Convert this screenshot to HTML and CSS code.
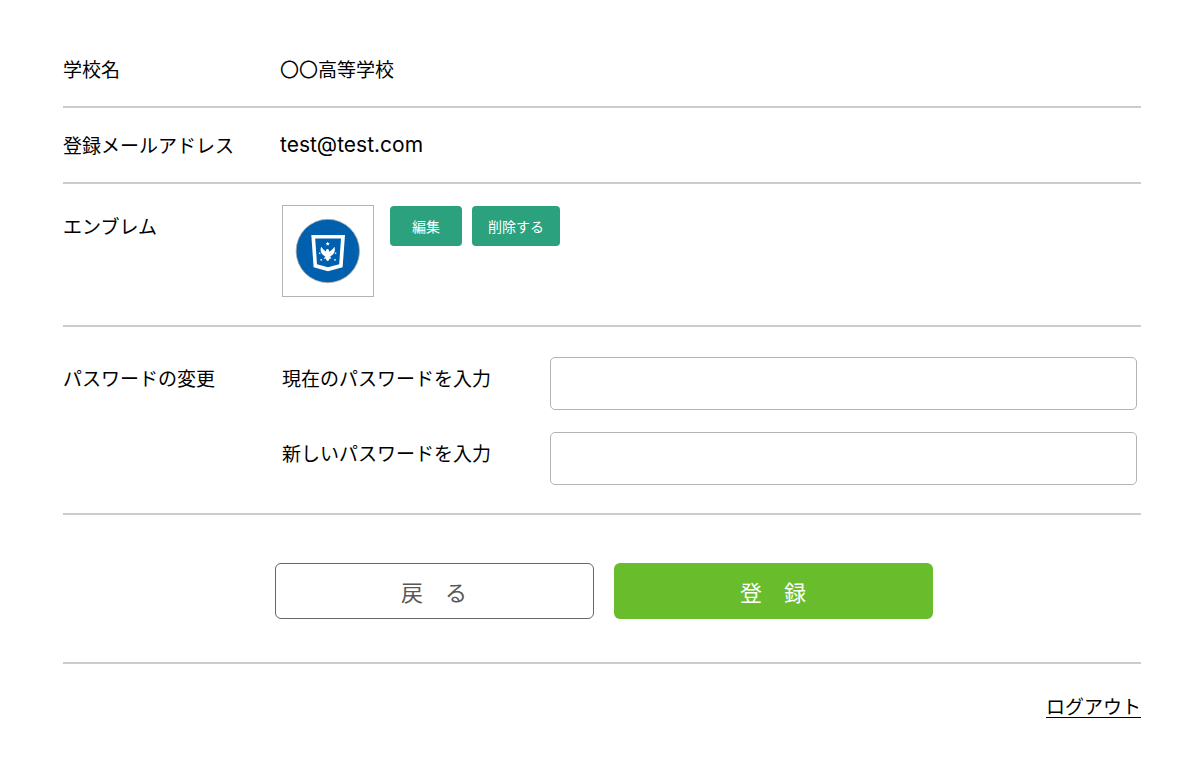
FILE: index.html
```html
<!DOCTYPE html>
<html lang="ja">
<head>
<meta charset="utf-8">
<meta name="viewport" content="width=device-width, initial-scale=1">
<title>学校情報</title>
<link rel="stylesheet" href="styles.css">
</head>
<body>
<main class="page">
  <form class="settings">
    <section class="row row-first">
      <div class="row-title">学校名</div>
      <div>〇〇高等学校</div>
    </section>
    <section class="row">
      <div class="row-title">登録メールアドレス</div>
      <div class="email">test@test.com</div>
    </section>
    <section class="row row-emblem">
      <div class="row-title">エンブレム</div>
      <div class="emblem-area">
        <div class="emblem-frame">
          <svg class="emblem" viewBox="0 0 92 92" role="img" aria-label="エンブレム">
            <circle cx="45.8" cy="46" r="31.7" fill="#0060ae" stroke="#b5b0a8" stroke-width="0.8"/>
            <path fill="#fff" fill-rule="evenodd" d="M29.3 30H63L60.6 62.2L46 66.2L31.6 62.2ZM33.2 33.6L35 59.3L46 62.3L57.2 59.3L59 33.6Z"/>
            <path fill="#fff" d="M45.7 36.8l.6 1.2 1.4.2-1 1 .2 1.4-1.2-.7-1.2.7.2-1.4-1-1 1.4-.2Z"/>
            <path fill="#fff" d="M39.2 41.8C40.2 43.6 42 45.2 44 46.6L44.2 44.4L45.8 43.9L46.8 44.8L47.2 46.8C49.4 45.4 51.2 43.8 52.4 41.8C53.4 44.6 52.8 47.4 51 49.4L48.2 51.4L49.4 53.6L47.6 53.4L47 55.2L45.6 55.9L44.4 55.2L43.8 53.4L41.6 53.9L43.2 51.4L40.4 49.4C38.5 47.4 38.1 44.6 39.2 41.8Z"/>
            <g fill="#fff"><circle cx="37.7" cy="48.2" r=".8"/><circle cx="53.6" cy="48.2" r=".8"/><circle cx="39.2" cy="54.8" r=".9"/><circle cx="53" cy="54.8" r=".9"/></g>
          </svg>
        </div>
        <div class="emblem-actions">
          <button class="small-button" type="button">編集</button>
          <button class="small-button small-button-wide" type="button">削除する</button>
        </div>
      </div>
    </section>
    <section class="row row-password">
      <div class="row-title">パスワードの変更</div>
      <div class="fields">
        <label for="current-password">現在のパスワードを入力</label>
        <input id="current-password" class="field" type="password">
        <label for="new-password">新しいパスワードを入力</label>
        <input id="new-password" class="field" type="password">
      </div>
    </section>
    <div class="actions">
      <button class="button button-back" type="button">戻　る</button>
      <button class="button button-save" type="submit">登　録</button>
    </div>
  </form>
  <footer class="footer"><a class="logout" href="#">ログアウト</a></footer>
</main>
</body>
</html>
```
FILE: styles.css
```css
* { box-sizing: border-box; }

body {
  margin: 0;
  background: #fff;
  color: #000;
  font-family: "Noto Sans CJK JP", sans-serif;
  font-size: 19px;
  line-height: 30px;
}

button, input { font-family: inherit; }

.page { padding: 32px 62px 32px 63px; }

.row {
  display: grid;
  grid-template-columns: 217px minmax(0, 1fr);
  padding: 22px 0;
  border-bottom: 2px solid #ccc;
}

.email {
  font-family: Inter, "Noto Sans CJK JP", sans-serif;
  font-size: 21px;
}

.row-emblem { padding: 21px 0 28px; }
.row-emblem .row-title { padding-top: 6px; }

.emblem-area {
  display: flex;
  align-items: flex-start;
  gap: 16px;
  padding-left: 2px;
}

.emblem-frame {
  flex: none;
  width: 92px;
  height: 92px;
  border: 1px solid #b3b3b3;
}

.emblem {
  display: block;
  width: 92px;
  height: 92px;
  margin: -1px;
}

.emblem-actions {
  display: flex;
  flex-wrap: wrap;
  gap: 10px;
  padding-top: 1px;
}

.small-button {
  width: 72px;
  height: 40px;
  padding: 0;
  border: 0;
  border-radius: 4px;
  background: #2ca17e;
  color: #fff;
  font-size: 14px;
}

.small-button-wide { width: 88px; }

.row-password { padding: 30px 0 28px; }
.row-password .row-title { padding-top: 6px; }

.fields {
  display: grid;
  grid-template-columns: 268px minmax(0, 1fr);
  row-gap: 22px;
  padding: 0 4px 0 2px;
}

.fields label { padding-top: 6px; }

.field {
  width: 100%;
  height: 53px;
  padding: 0 16px;
  border: 1px solid #b3b3b3;
  border-radius: 5px;
  background: #fff;
  font-size: 19px;
}

.actions {
  display: flex;
  justify-content: center;
  gap: 20px;
  padding: 48px 0 43px 3px;
  border-bottom: 2px solid #ccc;
}

.button {
  flex: 0 1 319px;
  height: 56px;
  padding: 0;
  border-radius: 6px;
  font-size: 22px;
}

.button-back {
  border: 1px solid #666;
  background: #fff;
  color: #595757;
}

.button-save {
  border: 0;
  background: #69bd2d;
  color: #fff;
}

.footer {
  padding-top: 27px;
  text-align: right;
}

.logout {
  color: #000;
  text-decoration-thickness: 1px;
  text-underline-offset: 3px;
}
```
